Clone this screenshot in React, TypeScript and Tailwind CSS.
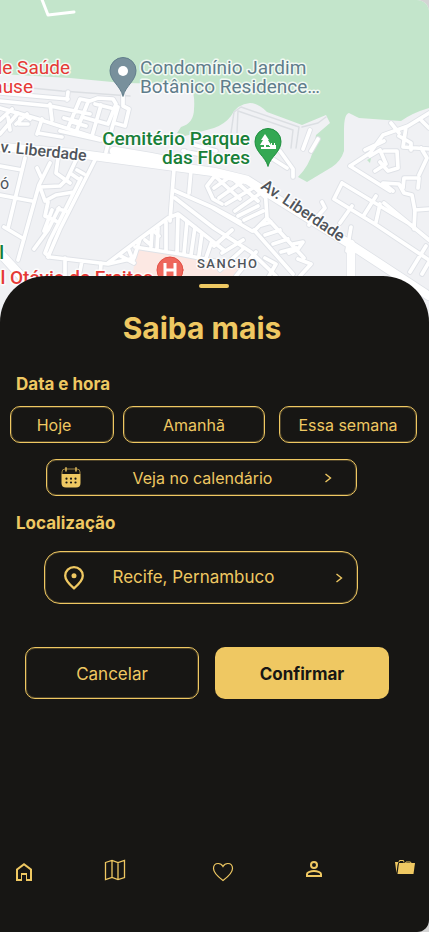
import type { ReactNode } from "react";

const minorRoads = [
  // north-west blocks
  "M0 93 L68 99 M68 92 L67 100",
  "M0 101 L50 106 L90 114",
  "M50 104 L52 120",
  "M0 108 L38 119 L106 141",
  "M0 120 L12 109 M0 134 L18 113",
  "M16 124 L27 114 M8 117 L10 130",
  "M20 118 L19 124 L28 124 M25 116 L30 119",
  "M42 119 L37 134 M38 133 L62 137",
  "M68 128 L80 99 L90 101 L98 98 L113 99 L116 104 L108 124 L82 117",
  "M88 102 L76 132 M101 105 L92 136 M95 104 L111 108",
  "M123 96 L123 106 L129 109 L125 126 L114 123 M118 107 L112 128 L106 152",
  "M72 122 L86 126 M64 118 L80 122 M60 131 L100 140",
  // west side
  "M25 158 L8 228 M0 195 L32 201 M4 227 L24 239",
  "M45 200 L45 201 M37 168 L41 177 M50 163 L39 185 L18 260",
  "M40 187 L45 201 L56 195 L74 192 M0 166 L22 170",
  "M58 158 L56 173 L70 183 M76 160 L67 179 L60 186 L40 187",
  "M70 173 L80 180 M77 170 L84 174 M48 202 L45 216 L56 221",
  "M58 209 L66 211 M59 208 L48 230 L34 249 M52 210 L44 231",
  "M96 158 L60 229 L48 257 M81 178 L50 240 L45 253 L50 257 L108 264 L130 259",
  "M65 258 L65 276 M82 261 L79 276 M101 263 L100 276",
  "M108 263 L141 238 L168 218 M119 255 L134 263 M128 248 L133 260 M140 239 L134 258",
  "M174 169 L170 221 M168 218 L178 214 L225 251",
  "M173 190 L214 208 L240 222 M175 198 L214 228 L251 252 L276 276",
  "M191 170 L189 193 M214 177 L207 186 L213 199 L222 204",
  "M135 247 L180 254 L234 265",
  "M152 231 L151 247 M158 228 L157 249 M166 222 L166 251 M178 216 L177 253 M187 221 L184 254 M195 227 L191 255 M202 233 L199 255 M212 241 L206 258",
  "M145 240 L151 245 M153 230 L159 236",
  // north middle blocks
  "M310 130 L303 149 M318 139 L311 151",
  "M183 151 L212 157 M195 145 L216 151 M185 151 L181 168",
  "M280 151 L293 169 L293 177 M265 154 L287 168",
  // San cho grid
  "M214 188 L231 176 M219 198 L246 179 M226 204 L258 185 M235 211 L265 190",
  "M217 178 L240 199 M231 177 L258 201 M247 181 L265 197",
  "M265 187 L267 218 L304 258 M267 218 L254 231 M254 230 L293 274",
  "M238 216 L258 206 M244 220 L263 211 M213 208 L252 231",
  "M261 225 L271 222 M265 235 L280 230 M273 244 L288 239 M281 252 L296 248",
  "M293 244 L303 242 L298 249 L289 253 M298 259 L311 264 L300 276",
  "M214 246 L232 230 M222 253 L243 240 M220 270 L243 249 M236 276 L256 252",
  "M265 258 L276 264 L269 276",
  // east side
  "M342 183 L413 226 M342 183 L334 199 L375 224 L429 260 M352 206 L340 223",
  "M364 215 L376 196 M384 203 L429 240",
  "M350 166 L370 153 L383 135 L408 126 L429 113 M350 166 L390 191",
  "M365 150 L384 141 M391 123 L399 133 M399 136 L411 143 L411 150",
  "M370 156 L380 150 L386 164 L375 171 M384 151 L397 151 L398 168 L388 171 L380 162",
  "M393 191 L383 183 L399 184 L404 193 L412 195 L415 211",
  "M403 188 L404 178 L419 178 L418 188 M421 148 L427 158 L419 175",
  "M429 209 L415 210 L414 229 M406 127 L403 147 L429 149",
  "M422 121 L429 128 M426 246 L410 272 M429 262 L422 274 M380 204 L376 222",
  "M322 202 L325 208 L317 217 M311 218 L309 225 M351 227 L347 251",
];

const tracks = [
  "M0 85 L62 91 L130 96",
  "M231 133 L234 112 L241 107 L299 127 L296 148",
  "M237 133 L238 111 L293 130 L291 148",
  "M302 127 L318 123 L326 117",
];

const avenues = [
  "M0 147 L72 153 L214 172 L247 180 L282 202 L348 243 L429 296",
  "M114 151 L150 157 L180 163",
  "M351 244 L351 280",
  "M0 253 L23 278",
];

function MapView() {
  return (
    <svg
      className="block h-[336px] w-full rounded-tr-xl"
      viewBox="0 0 429 336"
      preserveAspectRatio="xMidYMin slice"
      role="img"
      aria-label="Mapa"
      fontFamily="Roboto, 'Liberation Sans', sans-serif"
      strokeLinejoin="round"
      strokeLinecap="round"
    >
      <rect width="429" height="336" fill="#f0f1f4" />
      <path
        fill="#c3e5cb"
        d="M0 0H429V108Q412 113 401 121L359 118Q351 114 349 113Q344 114 344 130V151Q341 161 332 167L307 182L298 177Q309 166 313 151L316 135L330 123L326 115L302 125L267 112Q258 103 250 103Q237 104 231 116Q225 124 214 128L185 136L177 133L181 127Q194 123 194 109Q196 84 182 84L123 83L70 78L0 74Z"
      />
      <path fill="#fce8e3" d="M136 248L190 256L240 266V290H131Z" />
      <path d={tracks.join(" ")} fill="none" stroke="#dcdfe3" strokeWidth="1.500" />
      <path d={minorRoads.join(" ")} fill="none" stroke="#dfe2e7" strokeWidth="5.500" />
      <path d={avenues.join(" ")} fill="none" stroke="#dfe2e7" strokeWidth="10" />
      <path d={minorRoads.join(" ")} fill="none" stroke="#ffffff" strokeWidth="3.700" />
      <path d={avenues.join(" ")} fill="none" stroke="#ffffff" strokeWidth="8.500" />
      <path fill="#c3e5cb" d="M367 160L371 158L370 163Z" />
      <path d="M41 -3L48 15L74 12" fill="none" stroke="#ffffff" strokeWidth="3" />

      <path
        fill="#78909c"
        stroke="#607d8b"
        d="M123 96C120 85 110 81 110 70.500A13 13 0 0 1 136 70.500C136 81 126 85 123 96Z"
      />
      <circle cx="123" cy="71" r="5" fill="#ffffff" />
      <path
        fill="#34a853"
        stroke="#1e8e3e"
        d="M268 166C265 156 255 152 255 141.500A13 13 0 0 1 281 141.500C281 152 271 156 268 166Z"
      />
      <path
        fill="#ffffff"
        d="M265 134L269 140H268L271 145H266V147H270V146H269V145H271V143H272V145H274V143H275V145H276V147H276V149H261V147H264V145H260L263 140H261Z"
      />
      <circle cx="170" cy="270" r="13" fill="#ee675c" stroke="#e25045" />
      <path d="M165 263V278M175 263V278M165 270H175" stroke="#ffffff" strokeWidth="3" strokeLinecap="butt" />

      <g stroke="#ffffff" strokeWidth="3" strokeOpacity="0.8" paintOrder="stroke" fontSize="19">
        <g fill="#e53935" textAnchor="end">
          <text x="70" y="74">de Saúde</text>
          <text x="33" y="93">ause</text>
          <text x="153" y="284" fontWeight="500">l Otávio de Freitas</text>
        </g>
        <g fill="#607d8b">
          <text x="140" y="74">Condomínio Jardim</text>
          <text x="140" y="93">Botânico Residence…</text>
        </g>
        <g fill="#188038" fontWeight="500" textAnchor="end">
          <text x="250" y="145">Cemitério Parque</text>
          <text x="250" y="164">das Flores</text>
          <text x="4" y="259">l</text>
        </g>
        <g fill="#50555b" fontSize="16" fontWeight="500">
          <text x="86" y="161" textAnchor="end" transform="rotate(6 86 161)">v. Liberdade</text>
          <text x="260" y="188" transform="rotate(34 260 188)">Av. Liberdade</text>
          <text x="9" y="189" textAnchor="end" fontWeight="400">ó</text>
          <text x="197" y="268" fontSize="13" letterSpacing="1.500">SANCHO</text>
        </g>
      </g>
    </svg>
  );
}

const outlined =
  "border border-[#efc862] shadow-[inset_0_0_0_1px_rgba(239,200,98,0.25)]";

function Choice({ children, className }: { children: ReactNode; className: string }) {
  return (
    <button type="button" className={`h-[37px] rounded-[10px] text-base ${outlined} ${className}`}>
      {children}
    </button>
  );
}

function Chevron() {
  return (
    <svg className="h-[10px] w-[8px] shrink-0" viewBox="0 0 8 10" fill="none" stroke="currentColor" strokeWidth="1.400" aria-hidden="true">
      <path d="M1.500 1L6.500 5L1.500 9" />
    </svg>
  );
}

function CalendarIcon() {
  return (
    <svg className="h-[22px] w-5 shrink-0" viewBox="0 0 20 22" fill="currentColor" aria-hidden="true">
      <path d="M1 7V5Q1 2 4 2H16Q19 2 19 5V7" fill="none" stroke="currentColor" strokeWidth="0.600" />
      <path d="M5 0.700V4M15 0.700V4" stroke="currentColor" strokeWidth="1.400" strokeLinecap="round" />
      <path d="M0.500 7H19.500V16Q19.500 20.500 15 20.500H5Q0.500 20.500 0.500 16Z" />
      <g fill="#171614">
        <circle cx="5.500" cy="11.700" r="1.100" />
        <circle cx="10" cy="11.700" r="1.100" />
        <circle cx="14.500" cy="11.700" r="1.100" />
        <circle cx="5.500" cy="15.500" r="1.100" />
        <circle cx="10" cy="15.500" r="1.100" />
        <circle cx="14.500" cy="15.500" r="1.100" />
      </g>
    </svg>
  );
}

function PinIcon() {
  return (
    <svg className="h-6 w-5 shrink-0" viewBox="0 0 20 24" fill="none" stroke="currentColor" strokeWidth="2.300" aria-hidden="true">
      <path d="M10 22.300C5 18 1.200 14 1.200 9.700A8.800 8.500 0 0 1 18.800 9.700C18.800 14 15 18 10 22.300Z" />
      <circle cx="10" cy="9.700" r="2.500" fill="currentColor" stroke="none" />
    </svg>
  );
}

function NavLink({ label, className, children }: { label: string; className: string; children: ReactNode }) {
  return (
    <a href={`#${label.toLowerCase()}`} aria-label={label} className={className}>
      <svg className="block size-6" viewBox="0 0 24 24" fill="none" stroke="currentColor" aria-hidden="true">
        {children}
      </svg>
    </a>
  );
}

export default function App() {
  return (
    <div className="flex min-h-screen flex-col bg-[#d4d4d4] font-[Inter,'Open_Sans',sans-serif]">
      <MapView />
      <main className="-mt-[60px] flex flex-1 flex-col rounded-t-[46px] rounded-br-xl bg-[#171614] text-[#efc862]">
        <div className="pr-[2px]">
          <div className="mx-auto mt-2 h-1 w-[30px] rounded-full bg-[#efc862]" />
        </div>
        <h1 className="mt-5 pr-[25px] text-center text-[30px] leading-10 font-bold">Saiba mais</h1>

        <h2 className="mt-6 pl-4 text-[17px] leading-6 font-bold">Data e hora</h2>
        <div className="mt-[10px] grid grid-cols-[104fr_142fr_143fr] gap-x-[9px] pr-3 pl-[10px]">
          <Choice className="pr-4">Hoje</Choice>
          <Choice className="">Amanhã</Choice>
          <Choice className="ml-[5px]">Essa semana</Choice>
        </div>
        <button type="button" className={`mt-4 mr-[72px] ml-[46px] flex h-[37px] items-center rounded-[10px] pr-6 pl-[14px] text-base ${outlined}`}>
          <CalendarIcon />
          <span className="flex-1">Veja no calendário</span>
          <Chevron />
        </button>

        <h2 className="mt-[15px] pl-4 text-[17px] leading-6 font-bold">Localização</h2>
        <button type="button" className={`mt-4 mr-[71px] ml-11 flex h-[53px] items-center rounded-2xl pr-[14px] pl-[19px] text-[17px] ${outlined}`}>
          <PinIcon />
          <span className="flex-1 pr-8">Recife, Pernambuco</span>
          <Chevron />
        </button>

        <div className="mt-[43px] mr-10 ml-[25px] grid grid-cols-2 gap-4">
          <button type="button" className={`h-[52px] rounded-[10px] pt-1 text-[17px] ${outlined}`}>
            Cancelar
          </button>
          <button type="button" className="h-[52px] rounded-[10px] bg-[#efc862] pt-1 text-[17px] font-bold text-[#171614]">
            Confirmar
          </button>
        </div>

        <nav aria-label="Principal" className="mt-auto flex items-start justify-between px-3 pt-10 pb-12">
          <NavLink label="Início" className="pt-1">
            <path
              fill="currentColor"
              stroke="none"
              d="M6 19h3v-6h6v6h3v-9l-6-4.500L6 10zm-2 2V9l8-6 8 6v12h-6v-6h-4v6z"
            />
          </NavLink>
          <NavLink label="Mapa" className="pt-[2px]">
            <path
              strokeWidth="1.300"
              d="M2.500 4.500L9 2.500L15 4.500L21.500 2.500V19.500L15 21.500L9 19.500L2.500 21.500ZM9 2.500V19.500M15 4.500V21.500"
            />
          </NavLink>
          <NavLink label="Favoritos" className="pt-1 pl-4">
            <path
              strokeWidth="1.200"
              d="M12 20.500C8 17.500 2.500 13 2.500 8.500C2.500 5.500 4.500 3.500 7.200 3.500C9.500 3.500 11 4.700 12 6.500C13 4.700 14.500 3.500 16.800 3.500C19.500 3.500 21.500 5.500 21.500 8.500C21.500 13 16 17.500 12 20.500Z"
            />
          </NavLink>
          <NavLink label="Perfil" className="pt-[1px]">
            <circle cx="12" cy="8" r="3" strokeWidth="2" />
            <path strokeWidth="2" d="M5 19V17C5 15.300 9 14 12 14S19 15.300 19 17V19Z" />
          </NavLink>
          <NavLink label="Pastas" className="">
            <path fill="currentColor" stroke="none" d="M6 7H22L20.500 18H4.500Z" />
            <path fill="currentColor" stroke="none" d="M2 6H5.500L4.500 9L3.500 17Z" />
            <path strokeWidth="1" d="M6 6L6.500 4.500H10.500L11 6.500M12.500 7L13 6H17.500L18 7" />
          </NavLink>
        </nav>
      </main>
    </div>
  );
}
